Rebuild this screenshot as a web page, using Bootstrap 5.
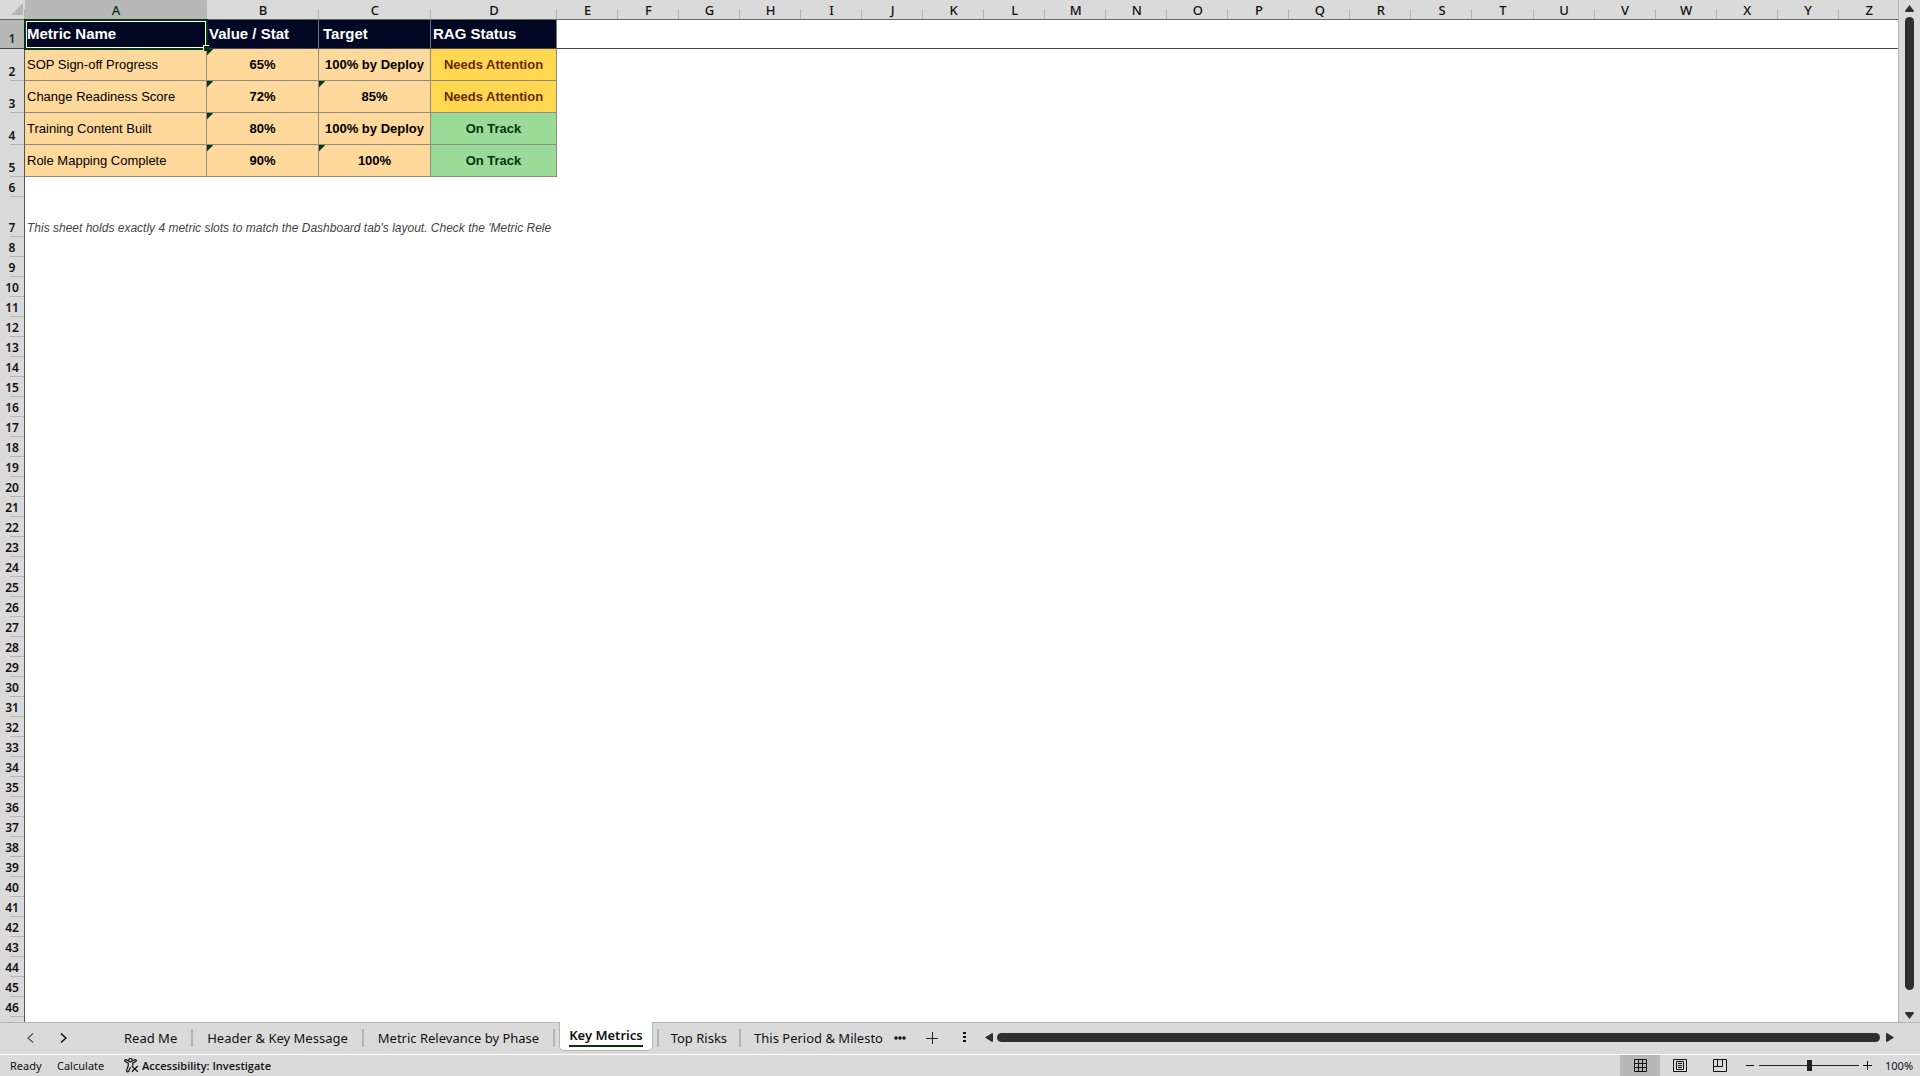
<!DOCTYPE html>
<html lang="en">
<head>
<meta charset="utf-8">
<meta name="viewport" content="width=device-width, initial-scale=1">
<title>Key Metrics</title>
<link href="https://cdn.jsdelivr.net/npm/bootstrap@5.3.0/dist/css/bootstrap.min.css" rel="stylesheet">
<style>
  :root { --chrome: #dadada; --edge: #b5b5b5; --dark: #2f2f2f; --ink: #111; --green: #06360f; }
  body { font-family: "Noto Sans", sans-serif; color: var(--ink); background: var(--chrome); line-height: 16px; }
  button { color: inherit; background: none; border: 0; padding: 0; line-height: 16px; }
  svg { display: block; }

  .sheet-area { background: #fff; border-right: 1px solid var(--edge); }
  .grid-table { table-layout: fixed; border-collapse: separate; border-spacing: 0; width: 1900px; }
  .grid-table th, .grid-table td { padding: 0 2px; overflow: hidden; white-space: nowrap; }
  .col-rows { width: 25px; } .col-a { width: 182px; } .col-b, .col-c { width: 112px; } .col-d { width: 126px; }

  .letter-row th { height: 20px; background: linear-gradient(var(--edge), var(--edge)) right bottom / 1px 10px no-repeat var(--chrome);
    border-bottom: 1px solid #666; font: 500 13px/18px "Noto Sans", sans-serif; text-align: center; vertical-align: bottom; }
  .letter-row th.picked { background-color: #b7b7b7; color: var(--green); }
  .grid-table tbody th { height: 20px; padding: 0; border-right: 1px solid #555;
    background: linear-gradient(var(--edge), var(--edge)) right bottom / 14px 1px no-repeat var(--chrome);
    font: 600 12px/18px "Noto Sans", sans-serif; text-align: center; vertical-align: bottom; }
  .grid-table tbody th.picked { background: #b7b7b7; color: var(--green); border-bottom: 1px solid #444; }

  .title-row td { height: 29px; border-bottom: 1px solid #444; }
  .title-row .head-cell { background: #020824; color: #fff; border-right: 1px solid #777; font: bold 15px/20px "Liberation Sans", Arial, sans-serif; }
  .metric-row td { height: 32px; }
  .metric-row .fill { background: #ffd89b; color: #000; border-right: 1px solid #8c8c84; border-bottom: 1px solid #8c8c84;
    font: bold 13px/18px "Liberation Sans", Arial, sans-serif; text-align: center; }
  .metric-row .label-cell { font-weight: normal; text-align: left; }
  .metric-row .warn { background: #ffd750; color: #652b06; }
  .metric-row .good { background: #9adb9a; color: #04360b; }
  .metric-row .flagged { background: linear-gradient(135deg, var(--green) 4px, transparent 5px) #ffd89b; }
  .note-row td { height: 40px; vertical-align: bottom; color: #444; font: italic 12px/18px "Liberation Sans", Arial, sans-serif; }
  .grid-table .active-cell { overflow: visible; }
  .cell-frame { left: -1px; top: -1px; right: -2px; bottom: -2px; border: 2px solid var(--green); box-shadow: inset 0 0 0 1px #fff; }
  .cell-handle { right: -3px; bottom: -3px; width: 6px; height: 6px; background: var(--green); border: solid #fff; border-width: 1px 0 0 1px; z-index: 1; }

  .side-scroll { width: 21px; padding: 5px 0 3px; }
  .thumb { background: var(--dark); border-radius: 5px; }
  .thumb-v { width: 9px; margin: 5px 0 22px; } .thumb-h { height: 9px; }

  .tab-strip { height: 33px; padding-bottom: 2px; border-top: 1px solid var(--edge); border-bottom: 1px solid #fff; font-size: 13px; }
  .nav-arrows { padding-left: 27px; gap: 26px; width: 110px; }
  .sheet-tab { height: 18px; padding: 0 14px; border-right: 2px solid var(--edge); white-space: nowrap; overflow: hidden; }
  .sheet-tab.current { height: 29px; margin: -1px 4px 0; padding: 0 9px; background: #fff; border: solid var(--edge); border-width: 0 1px 1px; border-radius: 0 0 5px 5px; font-weight: 600; }
  .current span { display: block; line-height: 20px; border-bottom: 2px solid var(--green); }
  .sheet-tab.lead-rule { padding: 0 12px; border-left: 2px solid var(--edge); }
  .sheet-tab.last-tab { width: 144px; padding: 0 0 0 13px; border: 0; text-align: left; }
  .more-btn { margin-left: 9px; } .add-btn { margin-left: 20px; } .split-btn { margin: 0 19px 0 25px; } .right-btn { margin: 0 26px 0 6px; }

  .status-strip { height: 21px; font-size: 11px; }
  .status-word { padding-left: 10px; width: 57px; } .calc-word { width: 67px; }
  .access-btn { gap: 3px; } .access-word { font-family: "Open Sans", sans-serif; font-weight: 600; }
  .view-btn { width: 40px; height: 21px; }
  .view-btn.on { background: #b7b7b7; }
  .minus-btn { margin: 0 5px 0 6px; } .plus-btn { margin: 0 13px 0 4px; } .zoom-word { width: 35px; white-space: nowrap; }
  .zoom-range { appearance: none; width: 100px; height: 12px; background: linear-gradient(#222, #222) center / 100% 1px no-repeat; }
  .zoom-range::-webkit-slider-thumb { appearance: none; width: 5px; height: 11px; background: #222; }
</style>
</head>
<body class="vh-100 d-flex flex-column overflow-hidden">
<main class="d-flex flex-grow-1 overflow-hidden">
  <div class="sheet-area flex-grow-1 overflow-hidden">
    <table class="grid-table">
      <colgroup id="cols"><col class="col-rows"><col class="col-a"><col class="col-b"><col class="col-c"><col class="col-d"></colgroup>
      <thead>
        <tr class="letter-row" id="letters"><th><svg class="ms-auto me-0 mb-1" width="12" height="12" aria-label="Select all"><path d="M12 0V12H0Z" fill="#b5b5b5"/></svg></th></tr>
      </thead>
      <tbody id="rows">
        <tr class="title-row"><th class="picked">1</th>
          <td class="head-cell active-cell position-relative">Metric Name<span class="cell-frame position-absolute"></span><span class="cell-handle position-absolute"></span></td>
          <td class="head-cell">Value / Stat</td><td class="head-cell ps-1">Target</td><td class="head-cell">RAG Status</td><td colspan="22"></td></tr>
        <tr class="metric-row"><th>2</th><td class="fill label-cell">SOP Sign-off Progress</td><td class="fill flagged">65%</td><td class="fill">100% by Deploy</td><td class="fill warn">Needs Attention</td><td colspan="22"></td></tr>
        <tr class="metric-row"><th>3</th><td class="fill label-cell">Change Readiness Score</td><td class="fill flagged">72%</td><td class="fill flagged">85%</td><td class="fill warn">Needs Attention</td><td colspan="22"></td></tr>
        <tr class="metric-row"><th>4</th><td class="fill label-cell">Training Content Built</td><td class="fill flagged">80%</td><td class="fill">100% by Deploy</td><td class="fill good">On Track</td><td colspan="22"></td></tr>
        <tr class="metric-row"><th>5</th><td class="fill label-cell">Role Mapping Complete</td><td class="fill flagged">90%</td><td class="fill flagged">100%</td><td class="fill good">On Track</td><td colspan="22"></td></tr>
        <tr><th>6</th><td colspan="26"></td></tr>
        <tr class="note-row"><th>7</th><td colspan="4">This sheet holds exactly 4 metric slots to match the Dashboard tab's layout. Check the 'Metric Rele</td><td colspan="22"></td></tr>
      </tbody>
    </table>
  </div>
  <div class="side-scroll d-flex flex-column align-items-center">
    <button aria-label="Scroll up"><svg width="9" height="7"><path d="M4.500 0L9 6Q9 7 8 7H1Q0 7 0 6Z" fill="#2f2f2f"/></svg></button>
    <div class="thumb thumb-v flex-grow-1"></div>
    <button aria-label="Scroll down"><svg width="9" height="7"><path d="M4.500 7L9 1Q9 0 8 0H1Q0 0 0 1Z" fill="#2f2f2f"/></svg></button>
  </div>
</main>

<nav class="tab-strip d-flex flex-shrink-0 align-items-center" aria-label="Sheets">
  <div class="d-flex align-items-center nav-arrows">
    <button aria-label="Previous sheet"><svg width="7" height="10" fill="none" stroke="#555" stroke-width="1.300"><path d="M6 .5L1 5L6 9.500"/></svg></button>
    <button aria-label="Next sheet"><svg width="7" height="10" fill="none" stroke="#111" stroke-width="1.500"><path d="M1 .5L6 5L1 9.500"/></svg></button>
  </div>
  <div class="d-flex flex-shrink-0 align-items-center align-self-stretch">
    <button class="sheet-tab">Read Me</button>
    <button class="sheet-tab">Header &amp; Key Message</button>
    <button class="sheet-tab">Metric Relevance by Phase</button>
    <button class="sheet-tab current align-self-start" aria-current="page"><span>Key Metrics</span></button>
    <button class="sheet-tab lead-rule">Top Risks</button>
    <button class="sheet-tab last-tab">This Period &amp; Milesto</button>
  </div>
  <button class="more-btn" aria-label="More sheets"><svg width="12" height="4" fill="#111"><circle cx="2" cy="2" r="1.700"/><circle cx="6" cy="2" r="1.700"/><circle cx="10" cy="2" r="1.700"/></svg></button>
  <button class="add-btn" aria-label="New sheet"><svg width="12" height="12" stroke="#222"><path d="M0 6.500H12M6.500 0V12"/></svg></button>
  <button class="split-btn" aria-label="Resize tabs"><svg width="3" height="11" fill="#111"><path d="M0 0h3v2H0zM0 4h3v2H0zM0 8h3v2H0z"/></svg></button>
  <button aria-label="Scroll left"><svg width="8" height="9"><path d="M0 4.500L7 0Q8 0 8 1V8Q8 9 7 9Z" fill="#2f2f2f"/></svg></button>
  <div class="thumb thumb-h flex-grow-1 ms-1"></div>
  <button class="right-btn" aria-label="Scroll right"><svg width="8" height="9"><path d="M8 4.500L1 0Q0 0 0 1V8Q0 9 1 9Z" fill="#2f2f2f"/></svg></button>
</nav>

<footer class="status-strip d-flex flex-shrink-0 align-items-center">
  <span class="status-word">Ready</span>
  <span class="calc-word">Calculate</span>
  <button class="access-btn d-flex align-items-center me-auto"><svg width="15" height="15" viewBox="0 0 15 15" fill="none" stroke="#111" stroke-width="1.200"><circle cx="6.500" cy="2.200" r="1.700"/><path d="M4.800 3L2 1.700Q.6 1.600.7 2.800Q.8 3.400 1.500 3.700L4.200 5V8L2.600 12.600Q2.500 13.900 3.600 13.900Q4.300 13.900 4.600 13.200L6.500 9.300M8.200 3L11 1.700Q12.400 1.600 12.300 2.800Q12.200 3.400 11.500 3.700L8.800 5V7.500M7.800 8L13.800 13.800M13.800 8L7.800 13.800"/></svg><span class="access-word">Accessibility: Investigate</span></button>
  <button class="view-btn on d-flex align-items-center justify-content-center" aria-label="Normal view"><svg width="13" height="13" fill="none" stroke="#111"><path d="M.5.5H12.500V12.500H.5ZM4.500 0V13M8.500 0V13M0 4.500H13M0 8.500H13"/></svg></button>
  <button class="view-btn d-flex align-items-center justify-content-center" aria-label="Page layout"><svg width="14" height="13" fill="none" stroke="#111"><path d="M.5.5H13.500V12.500H.5ZM3.500 2.500H10.500V10.500H3.500ZM5 4.500H9M5 6.500H9M5 8.500H9"/></svg></button>
  <button class="view-btn d-flex align-items-center justify-content-center" aria-label="Page break preview"><svg width="14" height="13" fill="none" stroke="#111"><path d="M.5.5H13.500V12.500H.5ZM4.500 0V7.500M9.500 0V7.500M0 7.500H9.500"/></svg></button>
  <button class="minus-btn" aria-label="Zoom out"><svg width="8" height="9" stroke="#111"><path d="M0 4.500H8"/></svg></button>
  <input class="zoom-range" type="range" min="10" max="190" value="100" aria-label="Zoom">
  <button class="plus-btn" aria-label="Zoom in"><svg width="9" height="9" stroke="#111"><path d="M0 4.500H9M4.500 0V9"/></svg></button>
  <span class="zoom-word">100%</span>
</footer>
<script src="https://cdn.jsdelivr.net/npm/bootstrap@5.3.0/dist/js/bootstrap.bundle.min.js"></script>
<script>
  // Column letters A to Z; columns after D share the remaining width.
  const letters = document.getElementById('letters');
  for (let i = 0; i < 26; i++) {
    const th = document.createElement('th');
    th.textContent = String.fromCharCode(65 + i);
    if (i === 0) th.className = 'picked';
    letters.append(th);
    if (i > 3) document.getElementById('cols').append(document.createElement('col'));
  }
  // Empty rows below the note; the last one is only partly in view and has no number.
  for (let n = 8; n <= 47; n++) {
    document.getElementById('rows').insertAdjacentHTML('beforeend', `<tr><th>${n < 47 ? n : ''}</th><td colspan="26"></td></tr>`);
  }
</script>
</body>
</html>
